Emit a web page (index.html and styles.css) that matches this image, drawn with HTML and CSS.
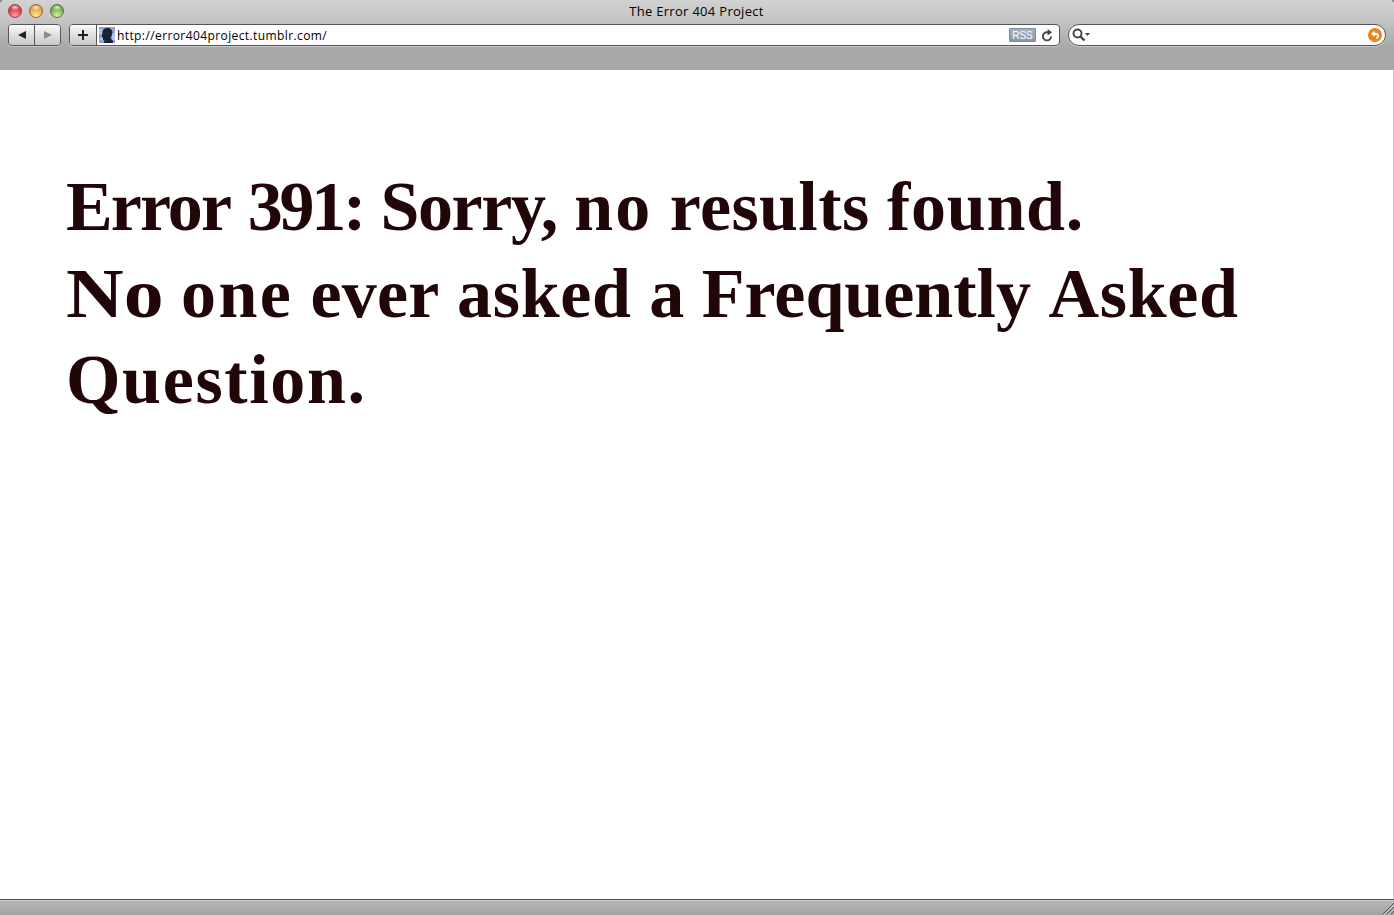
FILE: index.html
```html
<!DOCTYPE html>
<html lang="en">
<head>
<meta charset="utf-8">
<title>The Error 404 Project</title>
<link rel="stylesheet" href="styles.css">
</head>
<body>
<div class="window">
  <header class="chrome">
    <div class="titlebar">
      <div class="lights"><i class="light red"></i><i class="light amber"></i><i class="light green"></i></div>
      <div class="title"><span>The Error 404 Project</span></div>
    </div>
    <div class="toolbar">
      <div class="nav">
        <button class="back" aria-label="Back"><svg width="10" height="10" viewBox="0 0 10 10"><path d="M1 5 9 1v8z" fill="#222"/></svg></button>
        <button class="forward" aria-label="Forward"><svg width="10" height="10" viewBox="0 0 10 10"><path d="M9 5 1 1v8z" fill="#8c8c8c"/></svg></button>
      </div>
      <div class="address">
        <button class="add" aria-label="Add bookmark"><svg width="12" height="12" viewBox="0 0 12 12"><path d="M6 1v10M1 6h10" stroke="#222" stroke-width="2"/></svg></button>
        <svg class="favicon" width="16" height="16" viewBox="0 0 16 16"><path fill="#8fa2d0" d="M0 0h16v16H0z"/><path fill="#b4c2e6" d="M0 2h3v5H0zM13 6h3v7h-3zM1 11h3v2H1z"/><path d="M3.500 6C3.500 2.500 5.500 1 8.500 1c3.500 0 5.300 2.500 4.800 5.500-.3 2-1.500 3-1.600 5L14 14v2H4.500l1-2.500-1.500-.5v-2L2.800 9.500z" fill="#182236"/></svg>
        <div class="url"><span>http://error404project.tumblr.com/</span></div>
        <div class="rss"><span>RSS</span></div>
        <svg class="reload" width="12" height="13" viewBox="0 0 12 13"><path d="M7.500 3.200H6A4.100 4.100 0 1 0 10.100 7.500" fill="none" stroke="#444" stroke-width="1.900"/><path d="M6.600 0 11 3.200 6.600 6.400z" fill="#444"/></svg>
      </div>
      <div class="search">
        <svg width="19" height="14" viewBox="0 0 19 14"><circle cx="5.500" cy="5.500" r="4" fill="none" stroke="#444" stroke-width="1.900"/><path d="m8.500 8.500 4 4" stroke="#444" stroke-width="2.400"/><path d="M13 5h5l-2.500 3z" fill="#444"/></svg>
        <svg width="14" height="14" viewBox="0 0 14 14"><circle cx="7" cy="7" r="7" fill="#ed8319"/><path d="M3 5.800 6.500 2.800v2C9.800 4.700 11.500 6.200 11 8.500c-.4 1.500-1.500 2.200-3 2.400V9.500c2-.5 1.500-2.600-1.500-2.500v2z" fill="#fff"/></svg>
      </div>
    </div>
  </header>
  <main class="page">
    <h1 class="message">
      <span class="line"><span class="w-error">Error</span> <span class="w-number">391:</span> <span class="w-sorry">Sorry,</span> <span class="w-no">no</span> <span class="w-snug">results</span> <span class="w-loose">found.</span></span>
      <span class="line"><span class="w-initial">No</span> <span class="w-one">one</span> <span class="w-ever">ever</span> <span class="w-loose">asked</span> a <span>Frequently</span> <span class="w-loose">Asked</span></span>
      <span class="line"><span class="w-question">Question.</span></span>
    </h1>
  </main>
  <footer class="status"><svg width="12" height="13" viewBox="0 0 12 13"><path d="M1 12 12 1M5 12l7-7M9 12l3-3" stroke="#555"/><path d="M2 13 13 2M6 13l7-7" stroke="#d0d0d0" stroke-width=".7"/></svg></footer>
</div>
</body>
</html>
```
FILE: styles.css
```css
* { box-sizing: border-box; }
html { background: #7f8a88; }
body { margin: 0; font-family: "Open Sans", "Noto Sans", sans-serif; color: #000; }
.window { height: 915px; display: flex; flex-direction: column; overflow: hidden; border-radius: 5px 5px 0 0; background: #fff; }
.chrome { height: 70px; flex: none; background: linear-gradient(#d2d2d2 0, #c5c5c5 20px, #a8a8a8 47px, #a7a7a7 70px); }
.titlebar { height: 24px; display: grid; grid-template-columns: 100px 1fr 101px; }
.lights { display: flex; gap: 7px; padding: 4px 0 0 8px; }
.light { width: 14px; height: 14px; border-radius: 50%; border: 1px solid; }
.red { border-color: #914047; background: radial-gradient(ellipse 5px 3px at 50% 20%, #fffc, transparent), radial-gradient(circle at 50% 90%, #ffaaa9, #e4434b 55%, #b8313b); }
.amber { border-color: #95683b; background: radial-gradient(ellipse 5px 3px at 50% 20%, #fffc, transparent), radial-gradient(circle at 50% 90%, #ffef9e, #eca94d 55%, #b97632); }
.green { border-color: #4e743b; background: radial-gradient(ellipse 5px 3px at 50% 20%, #fffc, transparent), radial-gradient(circle at 50% 90%, #d3f5a7, #80b755 55%, #517f35); }
.title { text-align: center; font-size: 13px; line-height: 23px; letter-spacing: .3px; }
.toolbar { height: 22px; display: flex; padding: 0 8px; }
.nav { width: 53px; display: flex; margin-right: 8px; border: 1px solid #555; border-radius: 4px; overflow: hidden; box-shadow: 0 1px #c9c9c9; }
button { border: 0; padding: 0; margin: 0; display: flex; align-items: center; justify-content: center; background: linear-gradient(#fafafa, #ddd 55%, #c8c8c8); }
.back { width: 26px; border-right: 1px solid #555; }
.forward { flex: 1; }
.address { width: 991px; display: flex; align-items: center; border: 1px solid #555; border-radius: 4px; background: #fff; overflow: hidden; box-shadow: 0 1px #c9c9c9; }
.add { width: 27px; height: 20px; border-right: 1px solid #555; }
.favicon { margin-left: 2px; flex: none; }
.url { flex: 1; padding: 1px 0 0 2px; font-size: 12px; line-height: 20px; letter-spacing: .4px; }
.rss { width: 27px; height: 14px; border: 1px solid #7d8b99; border-radius: 1px; background: linear-gradient(#a8b4bf, #8798a8); color: #fff; font: 10px/13px "Liberation Sans", sans-serif; text-align: center; margin-right: 5px; }
.reload { margin-right: 6px; }
.search { width: 318px; margin-left: 8px; display: flex; align-items: center; justify-content: space-between; border: 1px solid #555; border-radius: 11px; background: #fff; padding: 0 3px; box-shadow: 0 1px #c9c9c9; }
.page { flex: 1; border-right: 1px solid #ccc; padding: 94px 66px 0; }
.message { margin: 0; font: bold 70px/86.500px "Liberation Serif", serif; color: #210609; }
.line { display: block; width: max-content; white-space: nowrap; }
.w-error { letter-spacing: -1.9px; }
.w-number { letter-spacing: -3.25px; }
.w-sorry { letter-spacing: -1.4px; }
.w-no { letter-spacing: 2px; }
.w-snug { letter-spacing: .4px; }
.w-loose { letter-spacing: .7px; }
/* Widened word: the transform supplies the extra width, the margin reserves it. */
.w-initial { display: inline-block; transform: scaleX(1.14); transform-origin: left; margin-right: 12px; }
.w-one { letter-spacing: 2.33px; }
.w-ever { letter-spacing: .2px; }
.w-question { letter-spacing: 1.65px; }
.status { height: 16px; flex: none; display: flex; justify-content: flex-end; align-items: flex-end; border-top: 1px solid #505050; box-shadow: inset 0 1px #c8c8c8; background: linear-gradient(#b9b9b9, #a0a0a0); }
```
